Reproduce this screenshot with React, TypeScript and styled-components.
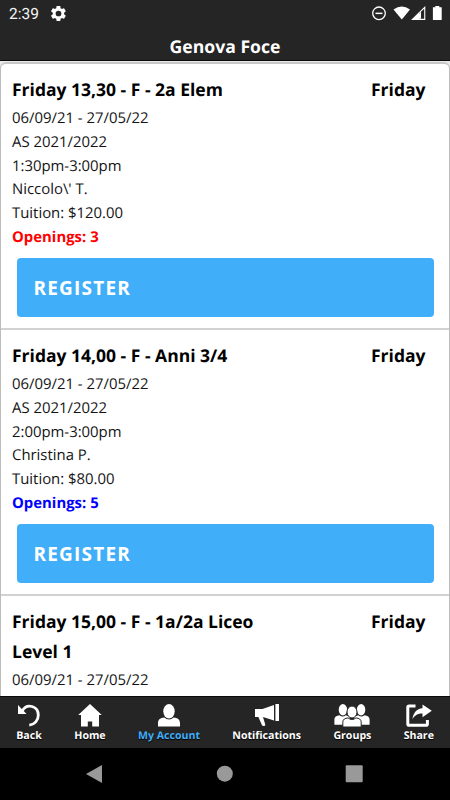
import React from "react";
import styled, { createGlobalStyle } from "styled-components";

const GlobalStyle = createGlobalStyle`
  * { box-sizing: border-box; }
  body { margin: 0; background: #000; }
`;

const Screen = styled.div`
  width: 450px;
  height: 800px;
  display: flex;
  flex-direction: column;
  overflow: hidden;
  background: #e9e9e9;
  color: #000;
  font-family: "Open Sans", "Noto Sans", sans-serif;
  text-rendering: geometricPrecision;
`;

const Header = styled.header`
  flex: none;
  height: 61px;
  background: #252525;
  border-bottom: 1px solid #0c0c0c;
  color: #fff;
`;

const StatusBar = styled.div`
  height: 28px;
  display: flex;
  align-items: center;
  padding: 0 8px 0 9px;
`;

const Clock = styled.span`
  width: 42px;
  font: 400 15.5px/28px Roboto, sans-serif;
  color: #f4f4f4;
`;

const GearIcon = styled.svg`
  display: block;
  width: 15px;
  height: 15px;
  margin-bottom: 1px;
  fill: #fff;
`;

const StatusIcons = styled.svg`
  margin-left: auto;
  display: block;
  width: 71px;
  height: 16px;
  fill: #fff;
`;

const PageTitle = styled.h1`
  margin: 3px 0 0;
  text-align: center;
  font-size: 17.6px;
  line-height: 32px;
  font-weight: 700;
`;

const Content = styled.main`
  flex: 1;
  min-height: 0;
  overflow: hidden;
  padding-top: 1px;
`;

const ClassList = styled.ul`
  margin: 0;
  padding: 0;
  list-style: none;
  background: #fff;
  border: 1px solid #bdbdbd;
  border-top-width: 2px;
  border-top-color: #c8c8c8;
  border-radius: 6px 6px 0 0;
`;

const ClassItem = styled.li`
  height: 266px;
  padding: 11px 15px 0 11px;
  border-bottom: 2px solid #d2d2d2;
`;

const TitleRow = styled.div`
  display: flex;
  justify-content: space-between;
  margin-bottom: 2px;
  padding-right: 8.5px;
  font-size: 17.5px;
  line-height: 30px;
  font-weight: 700;
`;

const ClassTitle = styled.span`
  width: 260px;
`;

const Detail = styled.div`
  font-size: 14.9px;
  line-height: 23.75px;
  font-weight: 400;
  color: #141414;
`;

const Openings = styled(Detail)<{ $tone: string }>`
  font-weight: 700;
  color: ${({ $tone }) => $tone};
`;

const RegisterButton = styled.button`
  display: block;
  width: 417px;
  height: 59px;
  margin: 8.3px 0 0 5px;
  padding: 1px 16.5px 0;
  border: 0;
  border-radius: 4px;
  background: #41aef9;
  color: #fff;
  text-align: left;
  font: 700 19px/58px "Open Sans", sans-serif;
  letter-spacing: 1.2px;
`;

const TabBar = styled.nav`
  flex: none;
  height: 52px;
  display: flex;
  justify-content: space-between;
  padding: 0 16px;
  background: #252525;
  border-top: 1px solid #0a0a0a;
`;

const Tab = styled.div<{ $active?: boolean }>`
  display: flex;
  flex-direction: column;
  align-items: center;
  padding-top: 6px;
  color: ${({ $active }) => ($active ? "#41aef9" : "#fff")};
  font-size: 10.6px;
  line-height: 15px;
  font-weight: 700;
  text-shadow: 0 1px 1px #000;
  white-space: nowrap;
`;

const TabIcon = styled.svg`
  display: block;
  flex: none;
  width: 36px;
  height: 26px;
  margin: 0 -5px;
  fill: #fff;
`;

const SystemBar = styled.div`
  flex: none;
  height: 52px;
  display: flex;
  justify-content: space-between;
  align-items: center;
  padding: 0 87px 0 85px;
  background: #000;
`;

const SystemIcon = styled.svg`
  display: block;
  width: 18px;
  height: 20px;
  fill: #999;
`;

const classes = [
  {
    title: "Friday 13,30 - F - 2a Elem",
    details: ["06/09/21 - 27/05/22", "AS 2021/2022", "1:30pm-3:00pm", "Niccolo\\' T.", "Tuition: $120.00"],
    openings: 3,
    tone: "#f00",
  },
  {
    title: "Friday 14,00 - F - Anni 3/4",
    details: ["06/09/21 - 27/05/22", "AS 2021/2022", "2:00pm-3:00pm", "Christina P.", "Tuition: $80.00"],
    openings: 5,
    tone: "#00f",
  },
  { title: "Friday 15,00 - F - 1a/2a Liceo Level 1", details: ["06/09/21 - 27/05/22"] },
];

const tabs: { label: string; active?: boolean; icon: React.ReactNode }[] = [
  {
    label: "Back",
    icon: (
      <>
        <path d="M11.5 7.5C16-.2 27.3 3 27.3 12.2c0 5.1-3.6 9.3-9 9.9" fill="none" stroke="#fff" strokeWidth="2.8" />
        <path d="M7 2v9h8.5Z" />
      </>
    ),
  },
  { label: "Home", icon: <path d="M18 1 6.2 12H9v11.5h6.8v-5h4.4v5H27V12h2.8Z" /> },
  {
    label: "My Account",
    active: true,
    icon: (
      <>
        <ellipse cx="18" cy="8.3" rx="5.7" ry="7.3" />
        <path d="M7 23.5v-3.2c0-3.8 2.5-5.2 6.3-5.7 2.8 2.5 6.6 2.5 9.4 0 3.8.5 6.3 1.9 6.3 5.7v3.2Z" />
      </>
    ),
  },
  {
    label: "Notifications",
    icon: (
      <path d="M6 6h7.5L25 2v15.5L14 14l2.2 7.2c.3 1-.2 1.7-1.1 1.8-1 .2-1.8-.1-2.2-1L9.4 14H6ZM26.4 1H30v17h-3.6Z" />
    ),
  },
  {
    label: "Groups",
    icon: (
      <>
        <ellipse cx="8.9" cy="6.7" rx="4.2" ry="5.7" />
        <ellipse cx="27.1" cy="6.7" rx="4.2" ry="5.7" />
        <path d="M.4 21.8v-5c0-3.1 2.4-4.1 5.1-4.5 2 1.7 4.3 1.7 6.3 0l4 1.4v8.1ZM35.6 21.8v-5c0-3.1-2.4-4.1-5.1-4.5-2 1.7-4.3 1.7-6.3 0l-4 1.4v8.1Z" />
        <g stroke="#252525" strokeWidth="1">
          <ellipse cx="18" cy="9" rx="5" ry="6" />
          <path d="M8.8 24v-4.8c0-3 2.2-3.9 5.3-4.3 2.3 2 5.5 2 7.8 0 3.1.4 5.3 1.3 5.3 4.3V24Z" />
        </g>
      </>
    ),
  },
  {
    label: "Share",
    icon: (
      <>
        <path d="M14.5 3H8.1q-1.3 0-1.3 1.3v16.6q0 1.3 1.3 1.3h17q1.3 0 1.3-1.3v-4" fill="none" stroke="#fff" strokeWidth="3" />
        <path
          d="M21.5 1.5 30.8 7.8l-9.3 6.5v-3.8c-4.8 0-7.6 1.7-10.1 5.7.8-6.3 4.2-10.5 10.1-11Z"
          stroke="#252525"
          strokeWidth="1.6"
          paintOrder="stroke"
        />
      </>
    ),
  },
];

export default function App() {
  return (
    <>
      <GlobalStyle />
      <Screen>
        <Header>
          <StatusBar>
            <Clock>2:39</Clock>
            <GearIcon viewBox="2 2 20 20">
              <path
                fillRule="evenodd"
                d="M19.4 13c.1-.3.1-.7.1-1s0-.7-.1-1l2.1-1.6c.2-.2.2-.4.1-.6l-2-3.5c-.1-.2-.4-.3-.6-.2l-2.5 1c-.5-.4-1.1-.7-1.7-1l-.4-2.6c0-.3-.2-.5-.5-.5h-4c-.2 0-.5.2-.5.5L9 5.1c-.6.3-1.2.6-1.7 1l-2.5-1c-.2-.1-.5 0-.6.2l-2 3.5c-.1.2-.1.4.1.6L4.5 11a8 8 0 0 0 0 2l-2.2 1.6c-.2.2-.2.4-.1.6l2 3.5c.1.2.4.3.6.2l2.5-1c.5.4 1.1.7 1.7 1l.4 2.6c0 .3.3.5.5.5h4c.3 0 .5-.2.5-.5l.4-2.6c.6-.3 1.2-.6 1.7-1l2.5 1c.2.1.5 0 .6-.2l2-3.5c.1-.2.1-.4-.1-.6ZM12 15.8a3.8 3.8 0 1 1 0-7.6 3.8 3.8 0 0 1 0 7.6Z"
              />
            </GearIcon>
            <StatusIcons viewBox="0 0 71 16">
              <circle cx="8" cy="7.3" r="6.3" fill="none" stroke="#fff" strokeWidth="1.3" />
              <path d="M4.5 6.6h7v1.5h-7Z" />
              <path d="M22.5 3.4Q30.8-2.2 39 3.4L30.8 13.6Z" />
              <path fillRule="evenodd" d="M40 14 54.3 0v14ZM48 7.6v5.2h5.2V2.8Z" />
              <path d="M48 7.6 50 5.6v7.2h-2Z" />
              <path d="M64.3 0h4v1.3h2.4V14h-8.8V1.3h2.4Z" />
            </StatusIcons>
          </StatusBar>
          <PageTitle>Genova Foce</PageTitle>
        </Header>
        <Content>
          <ClassList>
            {classes.map((c) => (
              <ClassItem key={c.title}>
                <TitleRow>
                  <ClassTitle>{c.title}</ClassTitle>
                  <span>Friday</span>
                </TitleRow>
                {c.details.map((d) => (
                  <Detail key={d}>{d}</Detail>
                ))}
                {c.tone && (
                  <>
                    <Openings $tone={c.tone}>Openings: {c.openings}</Openings>
                    <RegisterButton>REGISTER</RegisterButton>
                  </>
                )}
              </ClassItem>
            ))}
          </ClassList>
        </Content>
        <TabBar>
          {tabs.map((t) => (
            <Tab key={t.label} $active={t.active}>
              <TabIcon viewBox="0 0 36 26">{t.icon}</TabIcon>
              {t.label}
            </Tab>
          ))}
        </TabBar>
        <SystemBar>
          <SystemIcon viewBox="0 0 18 20">
            <path d="M1 10 17 1v18Z" />
          </SystemIcon>
          <SystemIcon viewBox="0 0 18 20">
            <circle cx="9.8" cy="9.7" r="8" />
          </SystemIcon>
          <SystemIcon viewBox="0 0 18 20">
            <rect x=".7" y="1.3" width="17" height="17" rx="1" />
          </SystemIcon>
        </SystemBar>
      </Screen>
    </>
  );
}
